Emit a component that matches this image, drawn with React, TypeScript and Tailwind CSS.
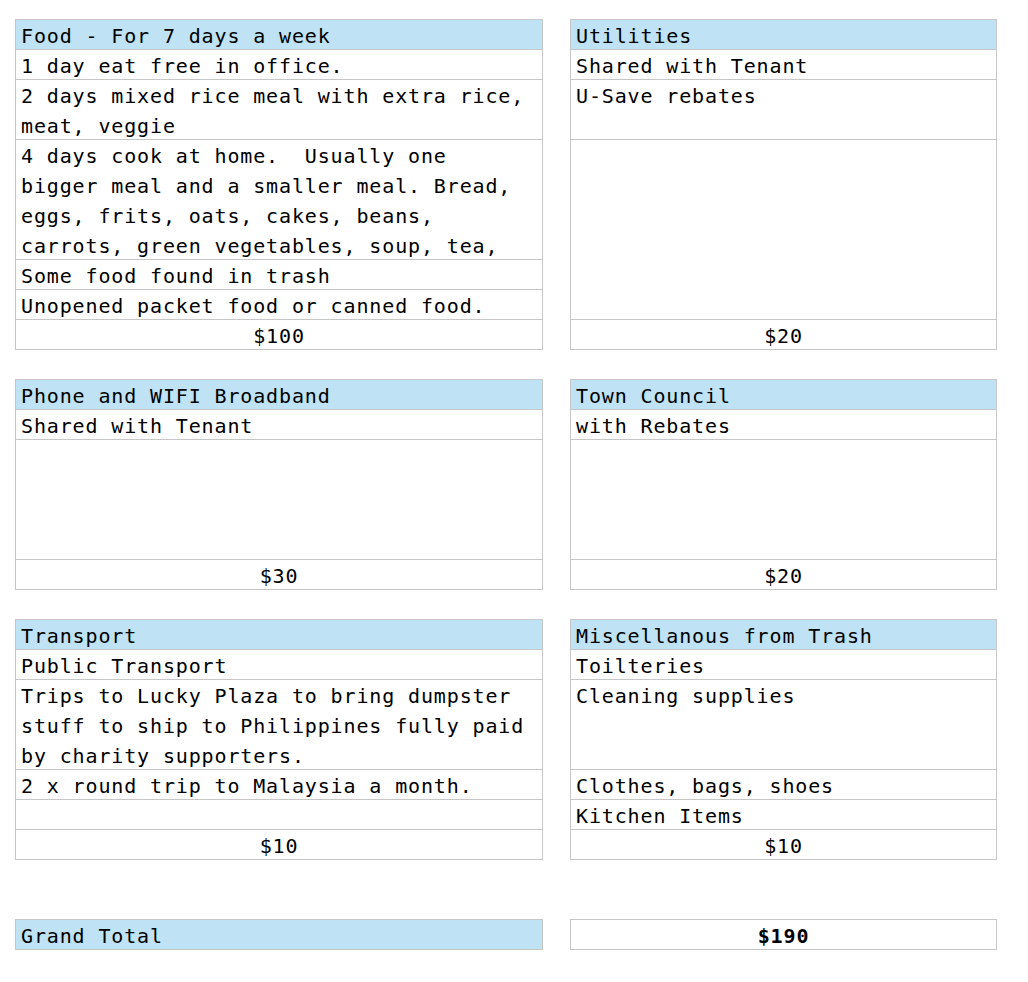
const HEIGHTS: Record<number, string> = {
  1: 'h-[30px]',
  2: 'h-[60px]',
  3: 'h-[90px]',
  4: 'h-[120px]',
  6: 'h-[180px]',
};

type Row = { lines: string[]; span?: number };
type Block = { title: string; rows: Row[]; total: string };

const SECTIONS: { left: Block; right: Block }[] = [
  {
    left: {
      title: 'Food - For 7 days a week',
      rows: [
        { lines: ['1 day eat free in office.'] },
        { lines: ['2 days mixed rice meal with extra rice,', 'meat, veggie'] },
        {
          lines: [
            '4 days cook at home.  Usually one',
            'bigger meal and a smaller meal. Bread,',
            'eggs, frits, oats, cakes, beans,',
            'carrots, green vegetables, soup, tea,',
          ],
        },
        { lines: ['Some food found in trash'] },
        { lines: ['Unopened packet food or canned food.'] },
      ],
      total: '$100',
    },
    right: {
      title: 'Utilities',
      rows: [
        { lines: ['Shared with Tenant'] },
        { lines: ['U-Save rebates'], span: 2 },
        { lines: [], span: 6 },
      ],
      total: '$20',
    },
  },
  {
    left: {
      title: 'Phone and WIFI Broadband',
      rows: [{ lines: ['Shared with Tenant'] }, { lines: [], span: 4 }],
      total: '$30',
    },
    right: {
      title: 'Town Council',
      rows: [{ lines: ['with Rebates'] }, { lines: [], span: 4 }],
      total: '$20',
    },
  },
  {
    left: {
      title: 'Transport',
      rows: [
        { lines: ['Public Transport'] },
        {
          lines: [
            'Trips to Lucky Plaza to bring dumpster',
            'stuff to ship to Philippines fully paid',
            'by charity supporters.',
          ],
        },
        { lines: ['2 x round trip to Malaysia a month.'] },
        { lines: [], span: 1 },
      ],
      total: '$10',
    },
    right: {
      title: 'Miscellanous from Trash',
      rows: [
        { lines: ['Toilteries'] },
        { lines: ['Cleaning supplies'], span: 3 },
        { lines: ['Clothes, bags, shoes'] },
        { lines: ['Kitchen Items'] },
      ],
      total: '$10',
    },
  },
];

function Cell({ span, className, children }: { span: number; className?: string; children?: React.ReactNode }) {
  return (
    <div className={`${HEIGHTS[span]} border-b border-[#c6c6c6] overflow-hidden pl-[5px] pt-px whitespace-pre leading-[30px] ${className ?? ''}`}>
      {children}
    </div>
  );
}

function Table({ block, width }: { block: Block; width: string }) {
  return (
    <div className={`${width} border-t border-x border-[#c6c6c6]`}>
      <Cell span={1} className="bg-[#bfe3f4]">{block.title}</Cell>
      {block.rows.map((row, i) => (
        <Cell key={i} span={row.span ?? Math.max(row.lines.length, 1)}>
          {row.lines.map((line, j) => (
            <div key={j}>{line}</div>
          ))}
        </Cell>
      ))}
      <Cell span={1} className="text-center pl-0 pr-[5px]">{block.total}</Cell>
    </div>
  );
}

export default function App() {
  return (
    <main
      className="min-h-screen bg-white text-black pl-[15px] pt-[19px] text-[20px] tracking-[0.86px]"
      style={{ fontFamily: '"DejaVu Sans Mono", "Liberation Mono", monospace' }}
    >
      <div className="flex flex-col gap-[29px]">
        {SECTIONS.map((s, i) => (
          <div key={i} className="flex items-start gap-[27px]">
            <Table block={s.left} width="w-[528px]" />
            <Table block={s.right} width="w-[427px]" />
          </div>
        ))}
      </div>

      {/* grand total */}
      <div className="flex items-start gap-[27px] mt-[59px]">
        <div className="w-[528px] border-t border-x border-[#c6c6c6]">
          <Cell span={1} className="bg-[#bfe3f4]">Grand Total</Cell>
        </div>
        <div className="w-[427px] border-t border-x border-[#c6c6c6]">
          <Cell span={1} className="text-center pl-0 pr-[5px] font-bold">$190</Cell>
        </div>
      </div>
    </main>
  );
}
